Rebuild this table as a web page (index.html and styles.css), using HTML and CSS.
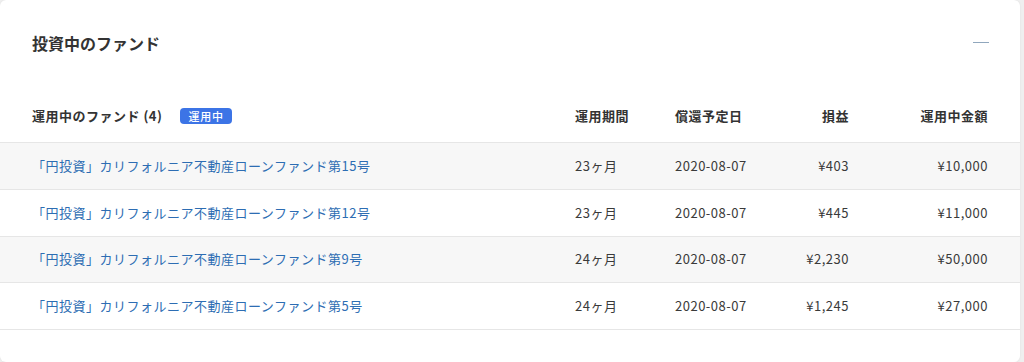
FILE: index.html
```html
<!DOCTYPE html>
<html lang="ja">
<head>
<meta charset="utf-8">
<link rel="stylesheet" href="styles.css">
</head>
<body>
<section class="card">
  <header class="card-head">
    <h2 class="card-title">投資中のファンド</h2>
    <span class="collapse" aria-label="折りたたむ"></span>
  </header>
  <div class="table">
    <div class="row head">
      <div class="cell name">運用中のファンド (4)<span class="badge">運用中</span></div>
      <div class="cell">運用期間</div>
      <div class="cell">償還予定日</div>
      <div class="cell num">損益</div>
      <div class="cell num">運用中金額</div>
    </div>
    <div class="row odd">
      <div class="cell name"><a class="fund" href="#">「円投資」カリフォルニア不動産ローンファンド第15号</a></div>
      <div class="cell">23ヶ月</div>
      <div class="cell">2020-08-07</div>
      <div class="cell num">¥403</div>
      <div class="cell num">¥10,000</div>
    </div>
    <div class="row">
      <div class="cell name"><a class="fund" href="#">「円投資」カリフォルニア不動産ローンファンド第12号</a></div>
      <div class="cell">23ヶ月</div>
      <div class="cell">2020-08-07</div>
      <div class="cell num">¥445</div>
      <div class="cell num">¥11,000</div>
    </div>
    <div class="row odd">
      <div class="cell name"><a class="fund" href="#">「円投資」カリフォルニア不動産ローンファンド第9号</a></div>
      <div class="cell">24ヶ月</div>
      <div class="cell">2020-08-07</div>
      <div class="cell num">¥2,230</div>
      <div class="cell num">¥50,000</div>
    </div>
    <div class="row">
      <div class="cell name"><a class="fund" href="#">「円投資」カリフォルニア不動産ローンファンド第5号</a></div>
      <div class="cell">24ヶ月</div>
      <div class="cell">2020-08-07</div>
      <div class="cell num">¥1,245</div>
      <div class="cell num">¥27,000</div>
    </div>
  </div>
</section>
</body>
</html>
```
FILE: styles.css
```css
html, body {
  margin: 0;
  padding: 0;
}
body {
  background: #efefef;
  font-family: "Noto Sans CJK JP", "Noto Sans", sans-serif;
  color: #3a3a3a;
  width: 1024px;
  height: 362px;
  overflow: hidden;
}
.card {
  box-sizing: border-box;
  width: 1020px;
  height: 362px;
  background: #fff;
  border-radius: 6px;
  box-shadow: 0 0 2px rgba(0,0,0,0.08);
  padding: 31px 32px 0;
}
.card-head {
  display: flex;
  align-items: center;
  justify-content: space-between;
  height: 24px;
}
.card-title {
  margin: 0;
  font-size: 16px;
  line-height: 24px;
  font-weight: 700;
  letter-spacing: 0;
  color: #333;
}
.collapse {
  display: block;
  width: 16px;
  height: 1px;
  background: #90a7bd;
  margin-right: -1px;
  margin-top: -1px;
}
.table {
  margin: 34px -32px 0;
}
.row {
  display: grid;
  grid-template-columns: 543px 100px 100px 74px 139px;
  padding: 0 32px;
  height: 45.75px;
  align-items: center;
  border-bottom: 1px solid #e6e6e6;
  font-size: 13px;
  letter-spacing: 0.5px;
}
.row.head {
  height: 53px;
  font-weight: 700;
  color: #333;
}
.row.odd {
  background: #f7f7f7;
}
.cell {
  white-space: nowrap;
  line-height: 20px;
}
.cell.num {
  text-align: right;
}
.name {
  display: flex;
  align-items: center;
}
.badge {
  display: inline-block;
  margin-left: 18px;
  background: #3c74e6;
  color: #fff;
  font-size: 11px;
  font-weight: 500;
  line-height: 16px;
  padding: 0 8px;
  border-radius: 4px;
  letter-spacing: 0.8px;
}
.fund {
  color: #2d6db3;
  text-decoration: none;
}
```
